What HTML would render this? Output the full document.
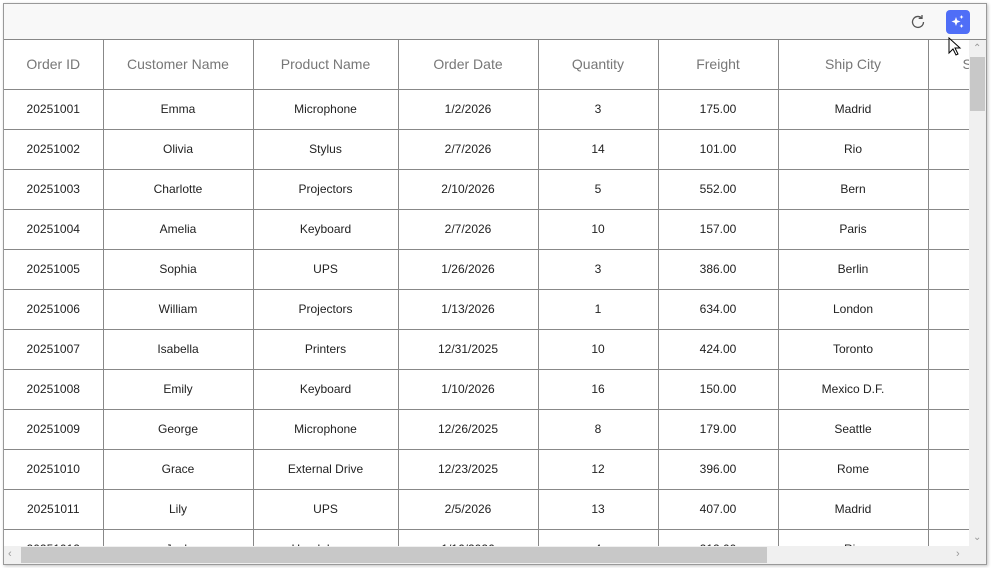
<!DOCTYPE html>
<html><head><style>
*{box-sizing:border-box;margin:0;padding:0}
body{width:991px;height:568px;background:#fff;font-family:"Liberation Sans",sans-serif;position:relative;overflow:hidden}
.frame{position:absolute;left:3px;top:3px;width:984px;height:562px;border:1px solid #999;box-shadow:1px 1px 3px rgba(0,0,0,.25);overflow:hidden;background:#fff}
.tb{position:absolute;left:0;top:0;width:982px;height:36px;background:#f8f8f8;border-bottom:1px solid #888}
.grid{position:absolute;left:0;top:36px;width:965px;height:506px;overflow:hidden}
table{border-collapse:collapse;table-layout:fixed;width:1099px}
td,th{border:1px solid #888;text-align:center;white-space:nowrap;overflow:hidden}
th{height:49px;font-weight:normal;font-size:14px;color:#777;border-top:none}
td{height:40px;font-size:12px;color:#222}
tr td:first-child,tr th:first-child{border-left:none}
.vs{position:absolute;left:965px;top:36px;width:17px;height:506px;background:#f0f0f0}
.hs{position:absolute;left:0;top:542px;width:982px;height:18px;background:#f0f0f0}
</style></head><body>
<div class="frame">
<div class="tb">
<svg style="position:absolute;left:905px;top:9px" width="18" height="18" viewBox="0 0 18 18"><path d="M14.5 9a5.5 5.5 0 1 1-2-4.3" fill="none" stroke="#555" stroke-width="1.3"/><path d="M13 2v3.3h-3.3" fill="none" stroke="#555" stroke-width="1.3"/></svg>
<div style="position:absolute;left:942px;top:6px;width:24px;height:24px;background:#4f6ef7;border-radius:4px">
<svg width="24" height="24" viewBox="0 0 24 24"><path d="M10 7l1.2 3.3 3.3 1.2-3.3 1.2L10 16l-1.2-3.3-3.3-1.2 3.3-1.2z M15.5 5l.6 1.4 1.4.6-1.4.6-.6 1.4-.6-1.4-1.4-.6 1.4-.6z M15.5 14l.6 1.4 1.4.6-1.4.6-.6 1.4-.6-1.4-1.4-.6 1.4-.6z" fill="#fff"/></svg></div>
<svg style="position:absolute;left:944px;top:33px" width="14" height="20" viewBox="0 0 14 20"><path d="M1 1v15l4-4 3 6 2-1-3-6h5z" fill="#fff" stroke="#000" stroke-width="1"/></svg>
</div>
<div class="grid"><table>
<colgroup><col style="width:99px"><col style="width:150px"><col style="width:145px"><col style="width:140px"><col style="width:120px"><col style="width:120px"><col style="width:150px"><col style="width:175px"></colgroup>
<tr><th>Order ID</th><th>Customer Name</th><th>Product Name</th><th>Order Date</th><th>Quantity</th><th>Freight</th><th>Ship City</th><th style="text-align:left;padding-left:34px">Ship Country</th></tr>
<tr><td>20251001</td><td>Emma</td><td>Microphone</td><td>1/2/2026</td><td>3</td><td>175.00</td><td>Madrid</td><td></td></tr>
<tr><td>20251002</td><td>Olivia</td><td>Stylus</td><td>2/7/2026</td><td>14</td><td>101.00</td><td>Rio</td><td></td></tr>
<tr><td>20251003</td><td>Charlotte</td><td>Projectors</td><td>2/10/2026</td><td>5</td><td>552.00</td><td>Bern</td><td></td></tr>
<tr><td>20251004</td><td>Amelia</td><td>Keyboard</td><td>2/7/2026</td><td>10</td><td>157.00</td><td>Paris</td><td></td></tr>
<tr><td>20251005</td><td>Sophia</td><td>UPS</td><td>1/26/2026</td><td>3</td><td>386.00</td><td>Berlin</td><td></td></tr>
<tr><td>20251006</td><td>William</td><td>Projectors</td><td>1/13/2026</td><td>1</td><td>634.00</td><td>London</td><td></td></tr>
<tr><td>20251007</td><td>Isabella</td><td>Printers</td><td>12/31/2025</td><td>10</td><td>424.00</td><td>Toronto</td><td></td></tr>
<tr><td>20251008</td><td>Emily</td><td>Keyboard</td><td>1/10/2026</td><td>16</td><td>150.00</td><td>Mexico D.F.</td><td></td></tr>
<tr><td>20251009</td><td>George</td><td>Microphone</td><td>12/26/2025</td><td>8</td><td>179.00</td><td>Seattle</td><td></td></tr>
<tr><td>20251010</td><td>Grace</td><td>External Drive</td><td>12/23/2025</td><td>12</td><td>396.00</td><td>Rome</td><td></td></tr>
<tr><td>20251011</td><td>Lily</td><td>UPS</td><td>2/5/2026</td><td>13</td><td>407.00</td><td>Madrid</td><td></td></tr>
<tr><td>20251012</td><td>Jack</td><td>Headphones</td><td>1/16/2026</td><td>4</td><td>212.00</td><td>Rio</td><td></td></tr>
</table></div>
<div class="vs"><div style="position:absolute;left:1px;top:17px;width:15px;height:54px;background:#c8c8c8"></div>
<div style="position:absolute;left:4px;top:3px;font-size:10px;color:#999">&#8963;</div>
<div style="position:absolute;left:4px;bottom:3px;font-size:10px;color:#999">&#8964;</div></div>
<div class="hs"><div style="position:absolute;left:17px;top:1px;width:746px;height:16px;background:#c8c8c8"></div>
<div style="position:absolute;left:4px;top:2px;font-size:11px;color:#999">&lsaquo;</div>
<div style="position:absolute;left:952px;top:2px;font-size:11px;color:#999">&rsaquo;</div></div>
</div>
</body></html>
